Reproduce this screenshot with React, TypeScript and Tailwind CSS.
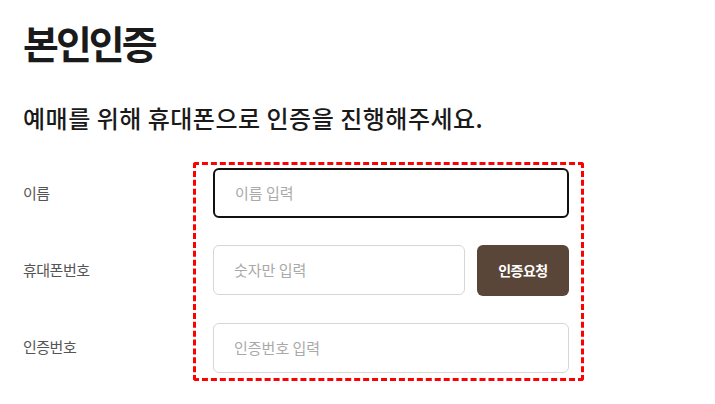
const font = "font-['Noto_Sans_CJK_KR','Noto_Sans',sans-serif]"

function Field({ placeholder, focused, grow }: { placeholder: string; focused?: boolean; grow?: boolean }) {
  return (
    <div
      className={`flex h-[50px] shrink-0 items-center rounded-[6px] bg-white px-[20px] text-[15px] text-[#a9a9a9] ${
        grow ? 'flex-1' : ''
      } ${focused ? 'border-2 border-[#111]' : 'border border-[#d6d6d6]'}`}
    >
      {placeholder}
    </div>
  )
}

export default function App() {
  const labels = ['이름', '휴대폰번호', '인증번호']
  return (
    <div className={`h-[404px] w-[715px] overflow-hidden bg-white pl-[23px] pt-[17px] ${font}`}>
      <h1 className="text-[39px] font-bold leading-[50px] tracking-[-3px] text-[#1a1a1a]">본인인증</h1>
      <h2 className="mt-[34px] text-[24px] font-medium leading-[34px] tracking-[0.5px] text-[#1a1a1a]">
        예매를 위해 휴대폰으로 인증을 진행해주세요.
      </h2>
      <div className="mt-[27px] flex">
        <div className="flex w-[170px] flex-col gap-[27px] pt-[6px]">
          {labels.map((l) => (
            <div key={l} className="flex h-[50px] items-center text-[15px] tracking-[-0.5px] text-[#555]">
              {l}
            </div>
          ))}
        </div>
        <div className="flex w-[391px] flex-col gap-[27px] rounded-[3px] border-[3px] border-dashed border-[#ff0000] pb-[5px] pl-[17px] pr-[12px] pt-[3px]">
          <Field placeholder="이름 입력" focused />
          <div className="flex gap-[12px]">
            <Field placeholder="숫자만 입력" grow />
            <button
              type="button"
              className="h-[51px] w-[92px] shrink-0 rounded-[6px] bg-[#5a4638] text-[14px] font-bold tracking-[-0.5px] text-white"
            >
              인증요청
            </button>
          </div>
          <Field placeholder="인증번호 입력" />
        </div>
      </div>
    </div>
  )
}
